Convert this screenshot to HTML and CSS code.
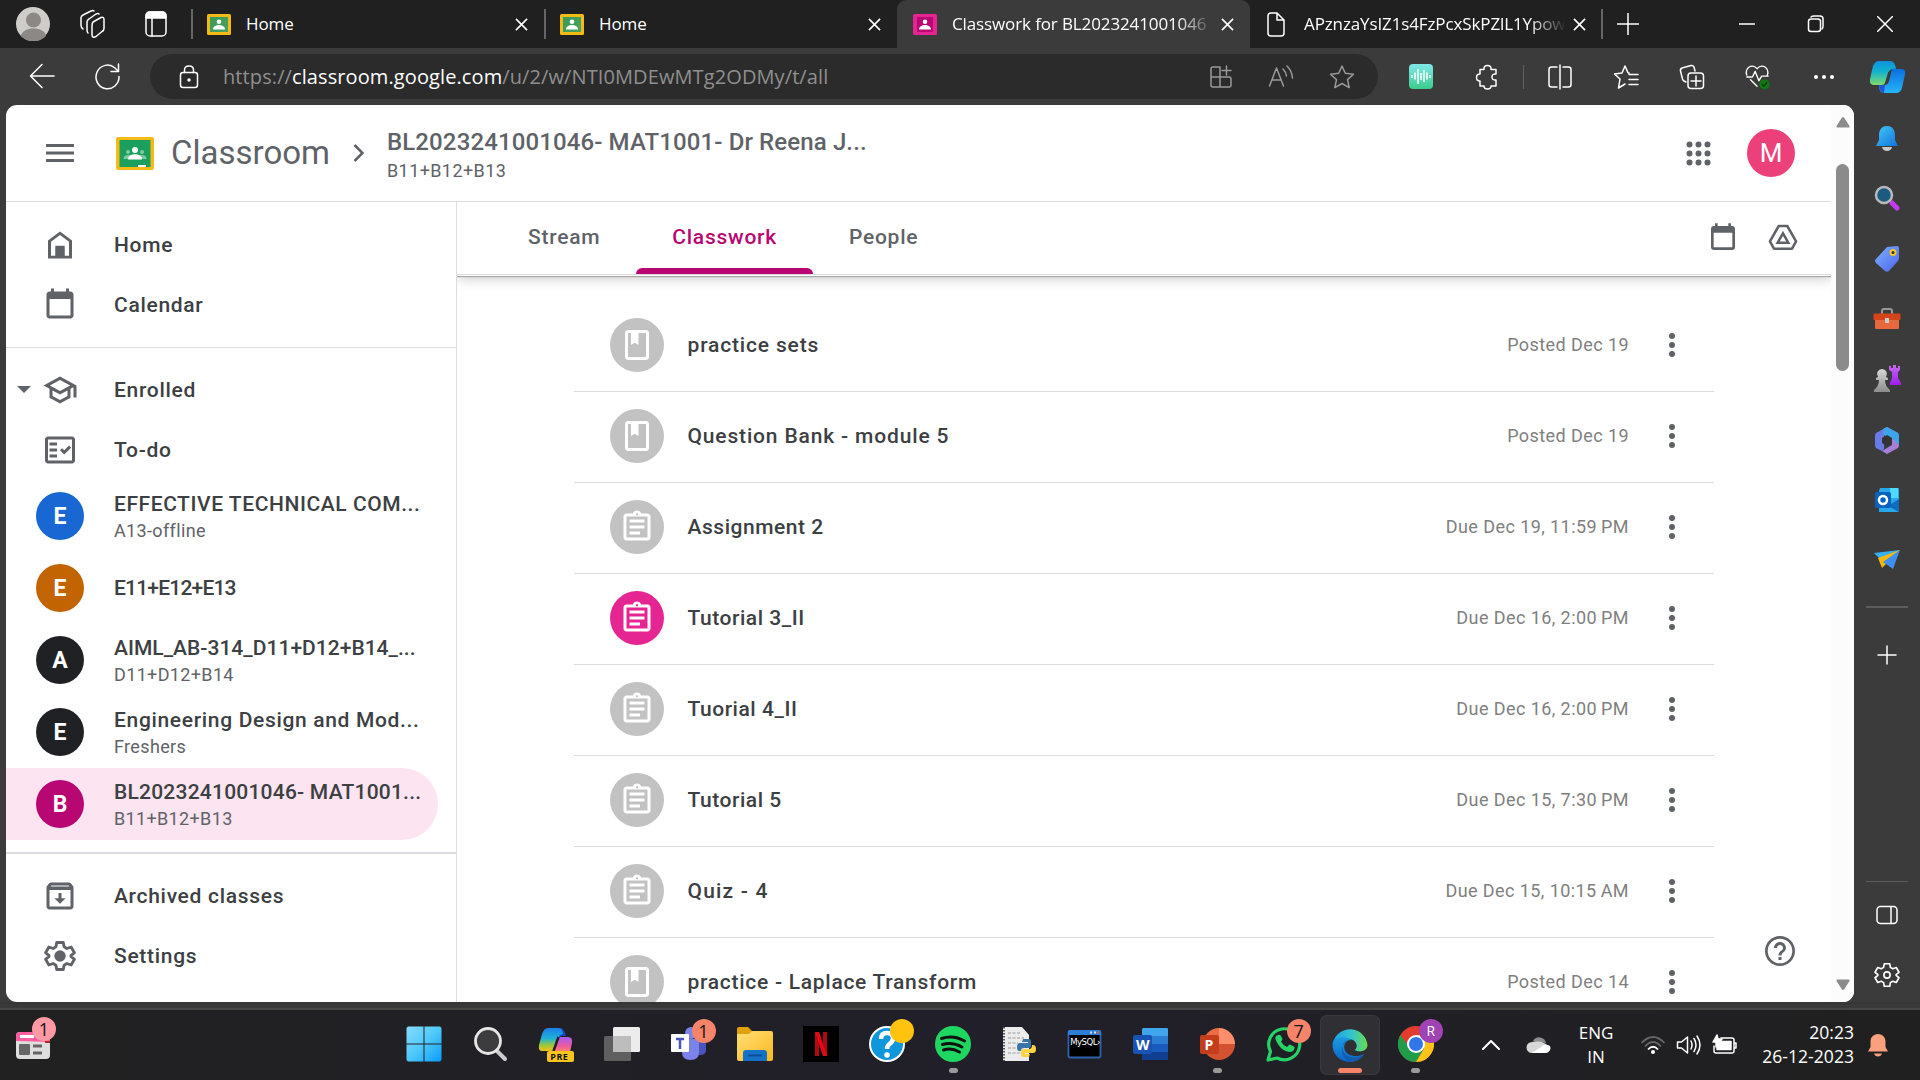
FILE: index.html
```html
<!DOCTYPE html>
<html lang="en">
<head>
<meta charset="utf-8">
<title>Classwork for BL2023241001046</title>
<link rel="stylesheet" href="styles.css">
</head>
<body>
<svg class="defs" aria-hidden="true">
  <defs>
    <linearGradient id="g-green" x1="0" y1="0" x2="1" y2="1"><stop offset="0" stop-color="#3a9a58"/><stop offset="1" stop-color="#4aa35f"/></linearGradient>
    <linearGradient id="g-wave" x1="0" y1="0" x2="0" y2="1"><stop offset="0" stop-color="#7fe9ea"/><stop offset="1" stop-color="#3ccb8d"/></linearGradient>
    <linearGradient id="g-cop1" x1="0" y1="0" x2="0" y2="1"><stop offset="0" stop-color="#0f8fe0"/><stop offset=".45" stop-color="#12b3cf"/><stop offset="1" stop-color="#7fdc6a"/></linearGradient>
    <linearGradient id="g-cop2" x1="0" y1="0" x2="0" y2="1"><stop offset="0" stop-color="#0a6fe0"/><stop offset="1" stop-color="#27b5fa"/></linearGradient>
    <linearGradient id="g-pre1" x1="0" y1="0" x2="0" y2="1"><stop offset="0" stop-color="#1a7fe8"/><stop offset=".45" stop-color="#1eb0d8"/><stop offset=".75" stop-color="#9bc93a"/><stop offset="1" stop-color="#f2c11a"/></linearGradient>
    <linearGradient id="g-pre2" x1="0" y1="0" x2="0" y2="1"><stop offset="0" stop-color="#a45cf0"/><stop offset=".6" stop-color="#ec5aa0"/><stop offset="1" stop-color="#ff8a5c"/></linearGradient>
    <linearGradient id="g-bell" x1="0" y1="0" x2="1" y2="1"><stop offset="0" stop-color="#44c8f8"/><stop offset="1" stop-color="#1173dd"/></linearGradient>
    <linearGradient id="g-tag" x1="0" y1="0" x2="1" y2="1"><stop offset="0" stop-color="#7cb4ff"/><stop offset="1" stop-color="#4f62ea"/></linearGradient>
    <linearGradient id="g-win" x1="0" y1="0" x2="1" y2="1"><stop offset="0" stop-color="#86dcfd"/><stop offset=".5" stop-color="#4fc8fb"/><stop offset="1" stop-color="#0a9bfb"/></linearGradient>
    <linearGradient id="g-folder" x1="0" y1="0" x2="1" y2="1"><stop offset="0" stop-color="#ffe07a"/><stop offset="1" stop-color="#fbb81a"/></linearGradient>
    <linearGradient id="g-edge" x1="0" y1="0" x2="1" y2="0"><stop offset="0" stop-color="#1ba0e6"/><stop offset=".55" stop-color="#35c5cc"/><stop offset="1" stop-color="#68dc4a"/></linearGradient>
    <linearGradient id="g-edge2" x1="0" y1="0" x2="0" y2="1"><stop offset="0" stop-color="#1b9de2"/><stop offset="1" stop-color="#0a63c9"/></linearGradient>
    <linearGradient id="g-gray" x1="0" y1="0" x2="0" y2="1"><stop offset="0" stop-color="#d8d8d8"/><stop offset="1" stop-color="#8c8c8c"/></linearGradient>
    <linearGradient id="g-purple" x1="0" y1="0" x2="0" y2="1"><stop offset="0" stop-color="#c66af2"/><stop offset="1" stop-color="#9d1cf0"/></linearGradient>
    <symbol id="favicon" viewBox="0 0 24 21"><rect width="24" height="21" rx="1.5" fill="#f5ba15"/><rect x="3" y="3" width="18" height="15" fill="url(#g-green)"/><circle cx="12" cy="7.8" r="2.3" fill="#fff"/><path d="M6 15.5c0-6 12-6 12 0z" fill="#fff"/></symbol>
    <symbol id="close" viewBox="0 0 14 14"><path d="M1 1l12 12M13 1L1 13" stroke="#fff" stroke-width="1.7" fill="none"/></symbol>
    <symbol id="calendar" viewBox="0 0 24 24"><path d="M19 3h-1V1h-2v2H8V1H6v2H5c-1.100 0-2 .9-2 2v14c0 1.100.9 2 2 2h14c1.100 0 2-.9 2-2V5c0-1.100-.9-2-2-2zm0 16H5V8h14v11z"/></symbol>
    <symbol id="material" viewBox="0 0 24 24"><path d="M18 2H6c-1.100 0-2 .9-2 2v16c0 1.100.9 2 2 2h12c1.100 0 2-.9 2-2V4c0-1.100-.9-2-2-2zm0 18H6V4h2v8l2.500-1.500L13 12V4h5v16z"/></symbol>
    <symbol id="assignment" viewBox="0 0 24 24"><path d="M7 15h7v2H7zm0-4h10v2H7zm0-4h10v2H7zm12-4h-4.180C14.400 1.840 13.300 1 12 1s-2.400.84-2.820 2H5c-1.100 0-2 .9-2 2v14c0 1.100.9 2 2 2h14c1.100 0 2-.9 2-2V5c0-1.100-.9-2-2-2zm-7-.25c.41 0 .75.340.75.750s-.34.750-.75.750-.75-.34-.75-.75.340-.75.750-.75zM19 19H5V5h14v14z"/></symbol>
    <symbol id="more" viewBox="0 0 24 24"><circle cx="12" cy="6" r="2"/><circle cx="12" cy="12" r="2"/><circle cx="12" cy="18" r="2"/></symbol>
    <symbol id="gear" viewBox="0 0 24 24"><path fill="none" stroke-linejoin="round" d="M9.800 3h4.400l.5 2.900 1.900 1.100 2.800-1 2.200 3.800-2.300 1.900v.6l2.300 1.900-2.200 3.800-2.800-1-1.900 1.100-.5 2.900H9.800l-.5-2.900L7.400 17l-2.800 1-2.200-3.800 2.300-1.900v-.6L2.400 9.800 4.600 6l2.800 1 1.900-1.100z"/></symbol>
  </defs>
</svg>
<div class="screen">

  <header class="tabstrip">
    <div class="strip-tools">
      <svg width="34" height="34" viewBox="0 0 34 34"><circle cx="17" cy="17" r="17" fill="#cfcdca"/><circle cx="17.500" cy="13" r="7.500" fill="#8b8885"/><path d="M5 29c1-10 24-10 25 0a17 17 0 0 1-25 0z" fill="#8b8885"/></svg>
      <svg class="line" width="28" height="30" viewBox="0 0 28 30"><path d="M14 13l8-4.500q3-1 3 2v9q0 2-2 3l-6 5q-4 2-4-2v-9q0-2 1-3.500zM9 24q-1-1-1-3v-8q0-2 2-3l7-5q2-1 3 0M4 20q-2-1-2-4V9q0-2 2-3l8-4q2-1 3 0"/></svg>
      <svg class="line" width="24" height="28" viewBox="0 0 24 28"><rect x="2" y="2" width="20" height="24" rx="4"/><path d="M2 6q0-4 4-4h12q4 0 4 4v2H2z" fill="#fff"/><path d="M8 8v18"/></svg>
    </div>
    <div class="tab divided"><svg class="fav"><use href="#favicon"/></svg><span class="tab-title">Home</span><svg class="x"><use href="#close"/></svg></div>
    <div class="tab divided"><svg class="fav"><use href="#favicon"/></svg><span class="tab-title">Home</span><svg class="x"><use href="#close"/></svg></div>
    <div class="tab active"><svg class="fav" viewBox="0 0 24 21"><rect width="24" height="21" rx="1.500" fill="#e52592"/><rect x="4" y="3" width="16" height="15" fill="#b80672"/><circle cx="12" cy="7.800" r="2.300" fill="#fff"/><path d="M6 15.500c0-6 12-6 12 0z" fill="#fff"/></svg><span class="tab-title faded">Classwork for BL2023241001046</span><svg class="x"><use href="#close"/></svg></div>
    <div class="tab"><svg class="line doc" width="20" height="25" viewBox="0 0 20 25"><path d="M2 4q0-3 3-3h6l7 7v13q0 3-3 3H5q-3 0-3-3zM11 1v7h7"/></svg><span class="tab-title faded">APznzaYsIZ1s4FzPcxSkPZlL1Ypow</span><svg class="x"><use href="#close"/></svg></div>
    <div class="new-tab divided"><svg class="line" width="22" height="22" viewBox="0 0 22 22"><path d="M11 .5v21M.5 11h21"/></svg></div>
    <div class="window-buttons">
      <svg class="line" width="16" height="16" viewBox="0 0 16 16"><path d="M0 8h15.500"/></svg>
      <svg class="line" width="18" height="18" viewBox="0 0 18 18"><rect x="1.500" y="4" width="12" height="12.500" rx="2.500"/><path d="M4 2q1-1 3-1h6q3 0 3 3v7q0 2-1 3"/></svg>
      <svg class="line" width="16" height="16" viewBox="0 0 16 16"><path d="M.5.500l15 15M15.500.500l-15 15"/></svg>
    </div>
  </header>

  <div class="toolbar">
    <div class="nav-buttons">
      <svg class="line" width="26" height="26" viewBox="0 0 26 26"><path d="M25 13H2M13 1.500L1.500 13 13 24.500"/></svg>
      <svg class="line" width="28" height="28" viewBox="0 0 28 28"><path d="M25 13.500A11.500 11.800 0 1 1 21 5l3 3M24.500 1v7.500H17"/></svg>
    </div>
    <div class="address">
      <svg class="line" width="20" height="26" viewBox="0 0 20 26"><rect x="1.500" y="8.500" width="17" height="15" rx="2.500"/><path d="M5.500 8.500V6q0-4 4.500-4t4.500 4v2.500"/><circle cx="10" cy="16" r="1" fill="#fff"/></svg>
      <span class="url">https://<b>classroom.google.com</b>/u/2/w/NTI0MDEwMTg2ODMy/t/all</span>
      <span class="address-tools">
        <svg class="line" width="24" height="24" viewBox="0 0 24 24"><path d="M2 4q0-2 2-2h7v20H4q-2 0-2-2zM2 12h18q2 0 2 2v6q0 2-2 2h-9M17.500 1v9M13 5.500h9"/></svg>
        <svg class="line" width="26" height="24" viewBox="0 0 26 24"><path d="M1.500 21L8.500 3l7 18M4.500 15h8M15 4q3 3 3.500 7M19 1q5 5 5.500 12"/></svg>
        <svg class="line" width="26" height="26" viewBox="0 0 26 26"><path d="M13 2l3.300 7.300 8.200.9-6 5.400 1.700 8L13 19.500l-7.200 4.100 1.700-8-6-5.400 8.200-.9z"/></svg>
      </span>
    </div>
    <div class="tools ext">
      <svg width="24" height="25" viewBox="0 0 24 25"><rect width="24" height="25" rx="4" fill="url(#g-wave)"/><path d="M3 11v3M6 8.500v7M9 5v15M12 9v7M15 6v12M18 8.500v7M21 11v3" stroke="#fff" stroke-width="1.500"/></svg>
      <svg class="line" width="24" height="26" viewBox="0 0 24 26"><path d="M5 5.500h4q-.5-4 3.500-4t3.500 4h5V10q-4-.5-4 3t4 3v6h-5q0 3-3.500 3t-3.500-3H5v-5q-3.500 0-3.500-3.500T5 10z"/></svg>
    </div>
    <div class="tool-divider"></div>
    <div class="tools">
      <svg class="line" width="26" height="26" viewBox="0 0 26 26"><path d="M10 3H4.500q-2.500 0-2.500 2.500v15q0 2.500 2.500 2.500H10M16 3h5.500q2.500 0 2.500 2.500v15q0 2.500-2.500 2.500H16M13 1v24"/></svg>
      <svg class="line" width="26" height="26" viewBox="0 0 26 26"><path d="M16 9l-1-.2L12 2 9 9l-7.500 1 5.500 5-1.500 9 6.500-4M16 10.500h9M16 15.500h9M16 20.500h9"/></svg>
      <svg class="line" width="26" height="26" viewBox="0 0 26 26"><path d="M7 18l-2-1q-1-.5-1.500-2L1.500 7q-.5-2 1.500-3l9-2.500q2-.5 3 1.500l1 4"/><rect x="9" y="9" width="15.500" height="15.500" rx="3"/><path d="M17 12v10M12 17h10"/></svg>
      <svg class="line" width="28" height="28" viewBox="0 0 28 28"><path d="M2 12q-2-5 2-8.500 5-3 9 1.500 4-4.500 9-1.500 4 3.500 2 8.500M6 17l7 7M2 14h6l3-6 4 10 3-5h7"/><circle cx="21" cy="22" r="5.500" fill="#0e7a0e" stroke="none"/><path d="M18.500 22l2 2 3-4" stroke="#04370a"/></svg>
      <svg width="22" height="8" viewBox="0 0 22 8"><g fill="#fff"><circle cx="3" cy="4" r="2"/><circle cx="11" cy="4" r="2"/><circle cx="19" cy="4" r="2"/></g></svg>
    </div>
    <div class="copilot"><svg width="37" height="34" viewBox="0 0 37 34"><path d="M23 9h9q5 0 4 5l-3 14q-1.500 5-6 5H15q-5 0-5-8h5q4 0 5-4z" fill="url(#g-cop2)"/><path d="M10 1h11q5 0 6 8-6-1-7.500 4l-3 9q-1 3-4 3H4q-4-1-3-6L4 6q2-5 6-5z" fill="url(#g-cop1)"/><path d="M10 25h6l-1 8q-4 0-5-8z" fill="#2354d8"/><path d="M20.500 12l-3.500 12" stroke="#3b3b3b" stroke-width="2.500"/></svg></div>
  </div>

  <div class="workspace">
    <div class="page">
      <div class="page-body">
        <div class="class-header">
          <svg width="28" height="18" viewBox="0 0 28 18"><path d="M0 1.500h28M0 9h28M0 16.500h28" stroke="#5f6368" stroke-width="3"/></svg>
          <svg class="logo" width="38" height="33" viewBox="0 0 38 33"><rect width="38" height="33" rx="2" fill="#f5ba15"/><rect x="3.500" y="3" width="31" height="27" fill="#1a9f5e"/><g fill="#7fcba1"><circle cx="12" cy="15" r="2"/><circle cx="26" cy="15" r="2"/><path d="M7.500 22q0-4 5-4h13q5 0 5 4z"/></g><circle cx="19" cy="13" r="3" fill="#fff"/><path d="M12 22.500c0-7 14-7 14 0z" fill="#fff"/><rect x="22" y="28" width="8" height="2" fill="#fff"/></svg>
          <span class="brand">Classroom</span>
          <svg class="crumb" width="11" height="18" viewBox="0 0 11 18"><path d="M1.500 1l8 8-8 8" fill="none" stroke="#5f6368" stroke-width="2.500"/></svg>
          <div class="crumb-text"><span class="crumb-title">BL2023241001046- MAT1001- Dr Reena J...</span><span class="crumb-sub">B11+B12+B13</span></div>
          <svg width="25" height="25" viewBox="0 0 25 25"><g fill="#5f6368"><circle cx="3.500" cy="3.500" r="3"/><circle cx="12.500" cy="3.500" r="3"/><circle cx="21.500" cy="3.500" r="3"/><circle cx="3.500" cy="12.500" r="3"/><circle cx="12.500" cy="12.500" r="3"/><circle cx="21.500" cy="12.500" r="3"/><circle cx="3.500" cy="21.500" r="3"/><circle cx="12.500" cy="21.500" r="3"/><circle cx="21.500" cy="21.500" r="3"/></g></svg>
          <span class="account">M</span>
        </div>
        <div class="columns">
          <nav class="drawer">
            <div class="drawer-group">
              <a class="drawer-item"><svg class="mi" viewBox="0 0 24 24"><path d="M12 3L4 9v12h16V9zm6 16.200H15V13H9v6.200H6V9.900l6-4.500 6 4.500z" fill-rule="evenodd"/><path d="M9 12.500h6V20H9z"/></svg><span>Home</span></a>
              <a class="drawer-item"><svg class="mi"><use href="#calendar"/></svg><span>Calendar</span></a>
            </div>
            <div class="drawer-group">
              <a class="drawer-item"><svg class="caret" width="14" height="8" viewBox="0 0 14 8"><path d="M0 0h14L7 7z"/></svg><svg class="mi" viewBox="0 0 24 24"><path d="M12 3L1 9l4 2.180v6L12 21l7-3.820v-6l2-1.090V17h2V9L12 3zm6.820 6L12 12.720 5.180 9 12 5.280 18.820 9zM17 15.990l-5 2.730-5-2.730v-3.720L12 15l5-2.730v3.720z"/></svg><span>Enrolled</span></a>
              <a class="drawer-item"><svg class="mi" viewBox="0 0 24 24"><path d="M20 3H4c-1.100 0-2 .9-2 2v14c0 1.100.9 2 2 2h16c1.100 0 2-.9 2-2V5c0-1.100-.9-2-2-2zm0 16H4V5h16v14zM19.410 10.420L17.990 9l-3.170 3.170-1.410-1.420L12 12.160 14.820 15zM5 7h5v2H5zM5 11h5v2H5zM5 15h5v2H5z"/></svg><span>To-do</span></a>
              <a class="class-item"><span class="badge blue">E</span><span class="class-text"><span class="name">EFFECTIVE TECHNICAL COM...</span><span class="section">A13-offline</span></span></a>
              <a class="class-item"><span class="badge orange">E</span><span class="class-text"><span class="name condensed">E11+E12+E13</span></span></a>
              <a class="class-item"><span class="badge dark">A</span><span class="class-text"><span class="name snug">AIML_AB-314_D11+D12+B14_...</span><span class="section">D11+D12+B14</span></span></a>
              <a class="class-item"><span class="badge dark">E</span><span class="class-text"><span class="name wide">Engineering Design and Mod...</span><span class="section">Freshers</span></span></a>
              <a class="class-item current"><span class="badge magenta">B</span><span class="class-text"><span class="name tight">BL2023241001046- MAT1001...</span><span class="section">B11+B12+B13</span></span></a>
            </div>
            <div class="drawer-group last">
              <a class="drawer-item"><svg class="mi" viewBox="0 0 24 24"><path d="M20.540 5.230l-1.390-1.680C18.880 3.210 18.470 3 18 3H6c-.47 0-.88.210-1.160.550L3.460 5.230C3.170 5.570 3 6.020 3 6.500V19c0 1.100.9 2 2 2h14c1.100 0 2-.9 2-2V6.500c0-.48-.17-.93-.46-1.270zM6.240 5h11.520l.5.700H5.740zM5 19V8h14v11zM11 10h2v3.500h2.800L12 17.200l-3.800-3.700H11z"/></svg><span>Archived classes</span></a>
              <a class="drawer-item"><svg class="mi stroked" viewBox="0 0 24 24"><use href="#gear"/><circle cx="12" cy="12" r="3.800" stroke="none"/></svg><span>Settings</span></a>
            </div>
          </nav>
          <main class="content">
            <div class="class-tabs">
              <a class="class-tab">Stream</a><a class="class-tab selected">Classwork</a><a class="class-tab">People</a>
              <span class="tab-actions">
                <svg class="ti"><use href="#calendar"/></svg>
                <svg class="ti" viewBox="0 0 24 24"><path fill="none" stroke-width="1.900" stroke-linejoin="round" d="M8.800 3h6.400L21.800 14.500l-3 5.500H5.200L2.200 14.500z" stroke="#5f6368"/><path fill="none" stroke-width="1.900" d="M12 8.500l4 7H8z" stroke="#5f6368"/></svg>
              </span>
            </div>
            <div class="list">
              <div class="row"><span class="disc"><svg><use href="#material"/></svg></span><span class="row-title ls-l">practice sets</span><span class="row-date">Posted Dec 19</span><svg class="kebab"><use href="#more"/></svg></div>
              <div class="row"><span class="disc"><svg><use href="#material"/></svg></span><span class="row-title ls-l">Question Bank - module 5</span><span class="row-date">Posted Dec 19</span><svg class="kebab"><use href="#more"/></svg></div>
              <div class="row"><span class="disc"><svg><use href="#assignment"/></svg></span><span class="row-title ls-s">Assignment 2</span><span class="row-date">Due Dec 19, 11:59&#8201;PM</span><svg class="kebab"><use href="#more"/></svg></div>
              <div class="row"><span class="disc pink"><svg><use href="#assignment"/></svg></span><span class="row-title ls-s">Tutorial 3_II</span><span class="row-date">Due Dec 16, 2:00&#8201;PM</span><svg class="kebab"><use href="#more"/></svg></div>
              <div class="row"><span class="disc"><svg><use href="#assignment"/></svg></span><span class="row-title ls-s">Tuorial 4_II</span><span class="row-date">Due Dec 16, 2:00&#8201;PM</span><svg class="kebab"><use href="#more"/></svg></div>
              <div class="row"><span class="disc"><svg><use href="#assignment"/></svg></span><span class="row-title ls-s">Tutorial 5</span><span class="row-date">Due Dec 15, 7:30&#8201;PM</span><svg class="kebab"><use href="#more"/></svg></div>
              <div class="row"><span class="disc"><svg><use href="#assignment"/></svg></span><span class="row-title ls-xl">Quiz - 4</span><span class="row-date">Due Dec 15, 10:15&#8201;AM</span><svg class="kebab"><use href="#more"/></svg></div>
              <div class="row"><span class="disc"><svg><use href="#material"/></svg></span><span class="row-title">practice - Laplace Transform</span><span class="row-date">Posted Dec 14</span><svg class="kebab"><use href="#more"/></svg></div>
            </div>
          </main>
        </div>
        <svg class="help" viewBox="0 0 24 24"><path d="M11 18h2v-2h-2v2zm1-16C6.480 2 2 6.480 2 12s4.480 10 10 10 10-4.480 10-10S17.520 2 12 2zm0 18.200a8.200 8.200 0 1 1 0-16.400 8.200 8.200 0 0 1 0 16.400zM12 6c-2.210 0-4 1.790-4 4h2c0-1.100.9-2 2-2s2 .9 2 2c0 2-3 1.750-3 5h2c0-2.250 3-2.500 3-5 0-2.210-1.790-4-4-4z"/></svg>
      </div>
      <div class="scrollbar">
        <svg width="14" height="11" viewBox="0 0 14 11"><path d="M7 0q1 0 2 2l4.500 7q.5 1.500-1 1.500h-11q-1.500 0-1-1.500L5 2q1-2 2-2z"/></svg>
        <div class="track"><div class="thumb"></div></div>
        <svg width="14" height="11" viewBox="0 0 14 11"><path d="M7 11q1 0 2-2l4.500-7q.5-1.500-1-1.500h-11Q0 .5.500 2L5 9q1 2 2 2z"/></svg>
      </div>
    </div>
    <aside class="edge-bar">
      <span class="edge-slot"><svg width="26" height="28" viewBox="0 0 26 28"><path d="M8 23q1 4 5 4t5-4z" fill="#c9c9c9"/><path d="M13 2c6 0 8 5 8 9v5l3 6H2l3-6v-5c0-4 2-9 8-9z" fill="url(#g-bell)"/></svg></span>
      <span class="edge-slot"><svg width="26" height="28" viewBox="0 0 26 28"><path d="M18 19l5 5" stroke="#c13cf0" stroke-width="5" stroke-linecap="round"/><circle cx="10" cy="11" r="8" fill="#1c5a80" stroke="#b9b9b9" stroke-width="2.500"/></svg></span>
      <span class="edge-slot"><svg width="26" height="28" viewBox="0 0 26 28"><path d="M13 2l10-1q2 0 2 2v10q0 2-1 3l-9 10q-2 1.500-4 0l-9-8q-2-2 0-4z" fill="url(#g-tag)"/><circle cx="19" cy="7.500" r="2.500" fill="#333" stroke="#f7c71e" stroke-width="2"/></svg></span>
      <span class="edge-slot"><svg width="28" height="24" viewBox="0 0 28 24"><path d="M9 7V4q0-2 2-2h6q2 0 2 2v3" fill="none" stroke="#999" stroke-width="2"/><rect x="2" y="12" width="24" height="10" rx="1.500" fill="#e8693d"/><rect x=".5" y="6.500" width="27" height="6.500" rx="1" fill="#d4441a"/><rect x="12" y="11" width="4" height="5" fill="#ccc"/></svg></span>
      <span class="edge-slot"><svg width="28" height="28" viewBox="0 0 28 28"><path d="M16 1h2v2h2V0h3v3h2V1h2v4l-2 2v6l3 5v2H17v-2l2-5V7l-3-2z" fill="url(#g-purple)"/><path d="M9 4a5 5 0 0 1 4 8l2 1v2h-3q0 6 5 10v2H1v-2q5-4 5-10H3v-2l2-1a5 5 0 0 1 4-8z" fill="url(#g-gray)"/></svg></span>
      <span class="edge-slot"><svg width="26" height="28" viewBox="0 0 26 28"><path d="M13 1L2 7q-1 1-1 3v9q0 2 1 3l6 3 2-2V9l15 10V10q0-2-1-3z" fill="#6a7be8"/><path d="M13 1l11 6q1 1 1 3v9L10 9l-1-6z" fill="#3ca6e8"/><path d="M25 19q0 2-1 3l-11 6-5-3 10-6V12z" fill="#a77ed8"/><path d="M13 9l5 3v5l-5 3-5-3v-5z" fill="#333"/></svg></span>
      <span class="edge-slot"><svg width="26" height="26" viewBox="0 0 26 26"><path d="M6 1h18q1 0 1 1v22q0 1-1 1H5V4z" fill="#28a8ea"/><path d="M16 1h8v10h-8z" fill="#50d9ff"/><path d="M25 12v13L14 19z" fill="#0f6cbd"/><rect x="1" y="5" width="16" height="16" rx="2" fill="#0a62c0"/><circle cx="9" cy="13" r="4" fill="none" stroke="#fff" stroke-width="2.500"/></svg></span>
      <span class="edge-slot"><svg width="26" height="20" viewBox="0 0 26 20"><path d="M0 3L26 0 8 11z" fill="#36b0f0"/><path d="M26 0L8 18 4 8z" fill="#f5b90f"/><path d="M26 0l-7 19-10-7z" fill="#3f8ff0"/></svg></span>
      <hr class="thick">
      <svg class="line" width="20" height="20" viewBox="0 0 20 20"><path d="M10 1v18M1 10h18"/></svg>
      <div class="spacer"></div>
      <hr>
      <svg class="line panel" width="22" height="20" viewBox="0 0 22 20"><rect x="1" y="1.500" width="20" height="17" rx="3.500"/><path d="M15 2v16"/></svg>
      <svg class="edge-gear" width="30" height="30" viewBox="0 0 24 24"><use href="#gear"/><circle cx="12" cy="12" r="2.500"/></svg>
    </aside>
  </div>

  <footer class="taskbar">
    <div class="widgets"><svg width="34" height="28" viewBox="0 0 34 28"><rect y="1" width="34" height="27" rx="4" fill="#dedede"/><path d="M0 10V5q0-4 4-4h26q4 0 4 4v6z" fill="#ff5fa2"/><path d="M29 10h5v2h-5z" fill="#b3261e"/><path d="M4 5.500h14" stroke="#fff" stroke-width="3"/><rect x="3" y="13" width="11" height="11" rx="1" fill="#666"/><path d="M17 15h9M17 22h9" stroke="#666" stroke-width="3"/></svg><span class="count pinkish">1</span></div>
    <div class="apps-row">
      <span class="app"><svg viewBox="0 0 36 36"><path d="M2 .5h15.500v17H.5V2zM18.500.500H34l1.500 1.500v15.500h-17zM.5 18.500h17v17H2L.5 34zM18.500 18.500h17V34L34 35.500H18.500z" fill="url(#g-win)"/></svg></span>
      <span class="app"><svg viewBox="0 0 36 36"><path d="M24 24l9 9" stroke="#c9ccd0" stroke-width="4" stroke-linecap="round"/><circle cx="16" cy="15" r="12.500" fill="#3c3c3e" stroke="#e6e6e6" stroke-width="2.800"/></svg></span>
      <span class="app"><svg viewBox="0 0 36 36"><path d="M20 11h10q5 0 4 6l-2 9H14z" fill="url(#g-pre2)"/><path d="M22 2q4 0 6 8-5-1-7 2z" fill="#1a46c8"/><path d="M10 2h11q3 0 4 6-4 0-5 6l-4 9q-1 2-3 2H4q-4-0-3-6L4 8q2-6 6-6z" fill="url(#g-pre1)"/><path d="M20.500 11l-5 14" stroke="#211f26" stroke-width="2.500"/><rect x="9" y="25" width="27" height="11" rx="2" fill="#f8c51c"/></svg><b class="pre">PRE</b></span>
      <span class="app"><svg viewBox="0 0 36 36"><rect x="9" y="1" width="27" height="25" rx="1.500" fill="#ececec"/><rect y="10" width="27" height="25" rx="1.500" fill="#5f5f5f"/><path d="M9 10h18v16H9z" fill="#bdbdbd"/></svg></span>
      <span class="app"><svg viewBox="0 0 36 36"><path d="M24 14h11v10q0 5-6 5h-5z" fill="#4b53bc"/><circle cx="20" cy="7" r="6" fill="#7b83eb"/><path d="M11 13h17v13q0 8-8.500 8T11 26z" fill="#7b83eb"/><rect y="8" width="18" height="18" rx="1" fill="#fff"/><path d="M5 13h8M9 13v10" stroke="#4b53bc" stroke-width="2.500"/></svg><span class="count coral">1</span></span>
      <span class="app"><svg viewBox="0 0 36 36"><path d="M0 3q0-2 2-2h9l4 4v6H0z" fill="#e0a10c"/><path d="M0 8h12l3-3h19q2 0 2 2v26q0 2-2 2H2q-2 0-2-2z" fill="url(#g-folder)"/><path d="M6 35v-8q0-3 3-3h18q3 0 3 3v8z" fill="#1472c8"/><path d="M11 29.500h14" stroke="#0a4f96" stroke-width="2"/></svg></span>
      <span class="app"><svg viewBox="0 0 36 36"><rect width="36" height="36" fill="#000"/><path d="M12 6h4v24h-4zM20 6h4v24h-4z" fill="#b20710"/><path d="M12 6h4l8 24h-4z" fill="#e50914"/></svg></span>
      <span class="app"><svg viewBox="0 0 36 36"><circle cx="18" cy="18" r="17" fill="#0f97dc" stroke="#fff" stroke-width="2"/><path d="M12 13q0-6 6-6t6 5.500q0 3-3.500 5.500-2.500 2-2.500 5" fill="none" stroke="#fff" stroke-width="4.500"/><circle cx="18" cy="29" r="2.800" fill="#fff"/></svg><span class="count amber"></span></span>
      <span class="app running"><svg viewBox="0 0 36 36"><circle cx="18" cy="18" r="18" fill="#1ed760"/><path d="M6.500 12.500q12-4 23 2.500M7.500 18.500q10-3 19.500 2.500M8.500 24q8-2.500 16 2" fill="none" stroke="#111" stroke-width="3" stroke-linecap="round"/></svg></span>
      <span class="app"><svg viewBox="0 0 36 36"><path d="M2 1h19l7 8v26H2z" fill="#ececec"/><path d="M7 7h12M7 12h16M7 17h10M7 22h9M7 27h12" stroke="#b5b5b5" stroke-width="1.500" stroke-dasharray="3 1.500"/><path d="M3 1v34" stroke="#555" stroke-width="2" stroke-dasharray="1.500 1.500"/><path d="M22 13h6q2 0 2 3v4q0 2-3 2h-4q-3 0-3 3h-2q-2 0-2-4t3-4h8v-1h-6z" fill="#3a74a8"/><path d="M28 31h-6q-2 0-2-3v-3q0-2 3-2h5q3 0 3-4h1q3 0 3 4t-3 4h-8v1h5z" fill="#fdd346"/></svg></span>
      <span class="app"><svg viewBox="0 0 36 36"><rect x="1.500" y="5" width="32" height="26.500" rx="1.500" fill="#000" stroke="#2f63ad" stroke-width="1.800"/><path d="M1 9V6q0-2 2-2h29q2 0 2 2v3z" fill="#2e7cd6"/><path d="M23 6.500h2M27 6.500h2" stroke="#cfe5ff" stroke-width="2"/><path d="M30 6.500h2" stroke="#e5603c" stroke-width="2"/></svg><span class="mysql">MySQL›</span></span>
      <span class="app"><svg viewBox="0 0 36 36"><path d="M10 2h24q1 0 1 1v8H9V3z" fill="#41a5ee"/><path d="M9 10h26v8H9z" fill="#2b7cd3"/><path d="M9 18h26v8H9z" fill="#185abd"/><path d="M9 26h26v7q0 1-1 1H10q-1 0-1-1z" fill="#103f91"/><rect y="9" width="19" height="19" rx="2" fill="#1854b4"/></svg><b class="office">W</b></span>
      <span class="app running"><svg viewBox="0 0 36 36"><path d="M19 2a16 16 0 0 0-16 16h16z" fill="#ed6c47"/><path d="M19 2a16 16 0 0 1 16 16H19z" fill="#ff8f6b"/><path d="M3 18a16 16 0 0 0 32 0z" fill="#d35230"/><rect y="9" width="19" height="19" rx="2" fill="#c43e1c"/></svg><b class="office">P</b></span>
      <span class="app"><svg viewBox="0 0 36 36"><path d="M2 34l2.500-8.500A15.500 15.500 0 1 1 11 32z" fill="none" stroke="#25d366" stroke-width="3.200" stroke-linejoin="round"/><path d="M12 9q2-1 3 1l1.500 3q0 1-1.500 2.500 2 4 6 5.500l2-2q1-1 2 0l3 1.500q1 .5.500 2-1 3.500-5 3.500-7-1-11-7t-3-8q.5-1.500 2.500-2z" fill="#25d366"/></svg><span class="count coral">7</span></span>
      <span class="app focused"><svg viewBox="0 0 36 36"><path d="M1 17a17.500 17.500 0 0 1 34.500 2c0 6-8 8-13 5 4-2 3-10-5-11-9-1-15 3-16.500 4z" fill="url(#g-edge)"/><path d="M.5 18c1-8 15-8 18.500-4-8 0-9 10-3 14 6 3.500 12 2 16 0-4 6-9 8-14 8-10 0-18-8-17.500-18z" fill="url(#g-edge2)"/><path d="M17 14c-8 1-9 12-1 16 6 3 11 1 16-1.500-3 5-8 7.500-14 7.500-8-3-13-17-1-22z" fill="#1656a5" fill-opacity=".75"/></svg></span>
      <span class="app running"><svg viewBox="0 0 36 36"><circle cx="18" cy="18" r="18" fill="#e33b2e"/><path d="M2.400 9A18 18 0 0 0 18 36l8-13.500-8-4.500H9z" fill="#1f9d4b"/><path d="M18 36A18 18 0 0 0 33.600 9H18l8 13.500z" fill="#fcc41a"/><circle cx="18" cy="18" r="9" fill="#fff"/><circle cx="18" cy="18" r="7" fill="#3076e8"/></svg><span class="count violet">R</span></span>
    </div>
    <div class="tray">
      <svg class="line" width="18" height="10" viewBox="0 0 18 10"><path d="M1 9l8-8 8 8" stroke-width="2"/></svg>
      <svg class="cloud" width="26" height="18" viewBox="0 0 26 18"><path d="M7 5a7 7 0 0 1 13 2z" fill="#8f8f8f"/><path d="M6 17a5.500 5.500 0 0 1 0-11q8-2 14 2a5 5 0 0 1 0 9z" fill="#d8d8d8"/><path d="M6 17h14a5 5 0 0 0 4-7q-5-3-9 1z" fill="#fff"/></svg>
      <span class="lang">ENG<br>IN</span>
      <svg class="wifi" width="26" height="20" viewBox="0 0 26 20"><g fill="none" stroke-width="1.800"><path d="M1.500 8q11.500-12 23 0M5 11.500q8-9 16 0" stroke="#666"/><path d="M8 14.500q5-5.500 10 0" stroke="#fff"/></g><circle cx="13" cy="17" r="2" fill="#fff"/></svg>
      <svg class="line" width="26" height="22" viewBox="0 0 26 22"><path d="M1.500 8v6h4l6 5V3l-6 5zM15 7q2 4 0 8M18 4.500q4 6.500 0 13M21 2q6 9 0 18"/></svg>
      <svg class="line" width="26" height="22" viewBox="0 0 26 22"><path d="M9 4h11q2 0 2 2v11q0 2-2 2H4q-2 0-2-2v-5M22 9h2v5h-2"/><path d="M9 7.500h10v8H5v-3z" fill="#fff"/><path d="M5 1L1 8h3v5l6-8H6z" fill="#fff"/></svg>
      <span class="clock">20:23<br>26-12-2023</span>
      <svg class="notify" width="20" height="24" viewBox="0 0 20 24"><path d="M10 1c5 0 7.500 4 7.500 7.500V14l2.500 4.500H0L2.500 14V8.500C2.500 5 5 1 10 1zM6 20.500h8q-1 3-4 3t-4-3z" fill="#f9a07f"/></svg>
    </div>
  </footer>
</div>
</body>
</html>
```
FILE: styles.css
```css
* { box-sizing: border-box; }
body { margin: 0; background: #3b3b3b; font-family: Roboto, "Liberation Sans", sans-serif; }
svg { display: block; flex: none; }
.defs { width: 0; height: 0; position: absolute; }
.screen { width: 1920px; height: 1080px; display: grid; grid-template-rows: 48px 57px 905px 70px; overflow: hidden; }
.line { fill: none; stroke: #fff; stroke-width: 1.5; stroke-linecap: round; stroke-linejoin: round; }

/* Browser tabs */
.tabstrip { display: flex; background: #202020; font-family: "Open Sans", "Noto Sans", sans-serif; color: #fff; }
.strip-tools { width: 191px; display: flex; align-items: center; gap: 29px; padding-left: 16px; }
.strip-tools svg:nth-child(3) { margin-left: 8px; }
.tab { width: 353px; height: 48px; display: flex; align-items: center; padding: 0 16px; flex: none; }
.tab:nth-last-child(3) { width: 351px; padding: 0 15px; }
.divided::before { content: ""; width: 1.5px; height: 30px; background: #666; margin: 0 14.5px 0 -16px; }
.tab.active { background: #3b3b3b; border-radius: 9px 9px 0 0; }
.fav { width: 24px; height: 21px; }
.doc { margin-left: 1px; margin-right: 3px; }
.tab-title { width: 260px; margin-left: 15px; font-size: 17px; line-height: 26px; letter-spacing: -.12px; white-space: nowrap; overflow: hidden; }
.faded { -webkit-mask-image: linear-gradient(to right, #000 225px, transparent 262px); mask-image: linear-gradient(to right, #000 225px, transparent 262px); }
.x { width: 13px; height: 13px; margin-left: 9px; }
.new-tab { display: flex; align-items: center; padding-left: 16px; width: 138px; }
.window-buttons { display: flex; align-items: center; gap: 52px; }

/* Address bar row */
.toolbar { display: flex; align-items: center; background: #3b3b3b; }
.nav-buttons { width: 150px; padding-left: 29px; display: flex; gap: 39px; }
.address { width: 1228px; height: 45px; border-radius: 23px; background: #2b2b2b; display: flex; align-items: center; padding: 0 23px 0 29px; }
.url { flex: 1; margin-left: 24px; font: 20px/28px "Open Sans", "Noto Sans", sans-serif; letter-spacing: .1px; color: #8f8f8f; }
.url b { font-weight: 400; color: #fff; }
.address-tools { display: flex; gap: 35px; align-items: center; }
.address-tools .line { stroke: #9a9a9a; }
.tools { display: flex; align-items: center; }
.tools svg { margin: 0 20px; width: 26px; }
.ext { margin-left: 10px; }
.tool-divider { width: 1.5px; height: 24px; background: #606060; margin: 0 2.5px; }
.copilot { flex: 1; display: flex; justify-content: center; padding-right: 2px; }

/* Page area */
.workspace { display: flex; background: linear-gradient(#3b3b3b 897px, #363636 897px, #3b3b3b 903px, #464646 903px); padding: 0 0 8px 6px; }
.page { width: 1848px; display: flex; background: #fff; border-radius: 11px; overflow: hidden; }
.page-body { width: 1825px; position: relative; display: flex; flex-direction: column; }
.class-header { height: 97px; border-bottom: 1px solid #dadce0; display: flex; align-items: center; padding: 0 36px 0 40px; }
.logo { margin-left: 42px; }
.brand { width: 173px; margin-left: 17px; font-size: 33px; line-height: 40px; color: #5f6368; }
.crumb { margin-left: 9px; }
.crumb-text { flex: 1; margin-left: 23px; padding-top: 3px; display: flex; flex-direction: column; color: #5f6368; }
.crumb-title { font-weight: 500; font-size: 24px; line-height: 30px; letter-spacing: .12px; }
.crumb-sub { font-size: 18px; line-height: 24px; letter-spacing: .4px; margin-top: 2px; }
.account { width: 48px; height: 48px; border-radius: 50%; margin-left: 36px; background: #ec407a; color: #fff; font-size: 26px; display: grid; place-items: center; }
.columns { flex: 1; display: flex; min-height: 0; }

/* Class drawer */
.drawer { width: 451px; border-right: 1px solid #dadce0; }
.drawer-group { padding: 12px 0; border-bottom: 1px solid #dadce0; }
.drawer-group:first-child { padding-top: 13px; }
.drawer-group:nth-child(2) { border-bottom-width: 2px; }
.drawer-group.last { border: 0; }
.drawer-item { height: 60px; display: flex; align-items: center; padding-left: 36px; color: #3c4043; font-weight: 500; font-size: 21px; letter-spacing: .7px; }
.drawer-item span { margin-left: 36px; }
.mi { width: 36px; height: 36px; fill: #5f6368; }
.stroked { stroke: #5f6368; stroke-width: 1.9; }
.caret { fill: #5f6368; margin: 0 11px 0 -25px; }
.class-item { height: 72px; display: flex; align-items: center; padding-left: 30px; }
.class-item.current { background: #fce4f0; border-radius: 0 36px 36px 0; width: 432px; }
.badge { width: 48px; height: 48px; border-radius: 50%; display: grid; place-items: center; color: #fff; font-weight: 700; font-size: 23px; }
.blue { background: #1967d2; }
.orange { background: #c26401; }
.dark { background: #202124; }
.magenta { background: #b80672; }
.class-text { margin-left: 30px; display: flex; flex-direction: column; white-space: nowrap; }
.name { font-weight: 500; font-size: 21px; line-height: 28px; color: #3c4043; letter-spacing: .57px; }
.name.wide { letter-spacing: .67px; }
.name.tight { letter-spacing: .22px; }
.name.snug { letter-spacing: .02px; }
.name.condensed { letter-spacing: -.8px; }
.section { font-size: 18px; line-height: 24px; margin: 1px 0 -1px; color: #5f6368; letter-spacing: .35px; }

/* Classwork list */
.content { flex: 1; display: flex; flex-direction: column; overflow: hidden; }
.class-tabs { height: 73px; flex: none; display: flex; padding-left: 35px; border-bottom: 1px solid #dadce0; box-shadow: 0 1px 0 #fff, 0 2px 1px #a8a8a8, 0 4px 12px rgba(0,0,0,.2); margin-bottom: 26px; }
.class-tab { padding: 0 36px; line-height: 70px; font-weight: 500; font-size: 21px; letter-spacing: .75px; color: #5f6368; }
.class-tab.selected { color: #b80672; display: flex; flex-direction: column; }
.class-tab.selected::after { content: ""; height: 6px; margin: -4px -36px 0; border-radius: 6px 6px 0 0; background: #b80672; }
.tab-actions { margin-left: auto; margin-right: 32px; display: flex; gap: 28px; align-items: center; }
.ti { width: 32px; height: 32px; fill: #5f6368; }
.list { margin-left: 117px; width: 1140px; flex: none; }
.row { height: 91px; border-bottom: 1px solid #dadce0; display: flex; align-items: center; padding: 0 24px 2px 36px; }
.disc { width: 54px; height: 54px; border-radius: 50%; background: #c2c2c2; display: grid; place-items: center; }
.disc.pink { background: #e52592; }
.disc svg { width: 36px; height: 36px; fill: #fff; }
.row-title { flex: 1; margin-left: 23.5px; font-weight: 500; font-size: 21px; color: #3c4043; letter-spacing: .72px; }
.ls-xl { letter-spacing: 1.2px; }
.ls-l { letter-spacing: .84px; }
.ls-s { letter-spacing: .54px; }
.row-date { font-size: 18px; letter-spacing: .42px; color: #808080; padding-bottom: 2px; }
.kebab { width: 36px; height: 36px; margin-left: 25px; fill: #5f6368; }
.help { position: absolute; right: 33px; bottom: 33px; width: 36px; height: 36px; fill: #5f6368; }
.scrollbar { width: 23px; background: #fcfcfc; display: flex; flex-direction: column; align-items: center; padding: 12px 0; }
.scrollbar svg { fill: #8b8b8b; }
.track { flex: 1; padding-top: 36px; }
.thumb { width: 13px; height: 207px; border-radius: 7px; background: #8b8b8b; }

/* Browser side bar */
.edge-bar { flex: 1; display: flex; flex-direction: column; align-items: center; padding: 3px 1px 12px 0; }
.edge-slot { height: 60.3px; display: grid; place-items: center; }
.edge-bar hr { width: 42px; height: 1px; border: 0; background: #5c5c5c; margin: 0 0 23px; flex: none; }
.edge-bar hr.thick { height: 2px; margin: 16px 0 37px; }
.spacer { flex: 1; }
.panel { margin-bottom: 35px; }
.edge-gear { fill: none; stroke: #fff; stroke-width: 1.3; }

/* Task bar */
.taskbar { background: linear-gradient(90deg, #212121, #211f29 50%, #202020); display: flex; align-items: center; color: #fff; }
.widgets { width: 391px; padding: 0 0 1px 16px; position: relative; }
.apps-row { width: 1058px; height: 60px; display: grid; grid-template-columns: repeat(16, 1fr); }
.app { position: relative; display: grid; place-items: center; padding-bottom: 2px; }
.app svg { width: 36px; height: 36px; }
.count { position: absolute; width: 24px; height: 24px; border-radius: 50%; color: #161616; font: 18px/24px "Open Sans", sans-serif; text-align: center; left: 36px; top: 4px; }
.widgets .count { left: 32px; top: -14px; }
.pinkish { background: #ff99a4; }
.coral { background: #f5846a; }
.amber { background: #ffc20e; }
.violet { background: #a142b5; color: #fff; font-size: 14px; }
.pre { position: absolute; left: 27px; top: 36px; font: 700 9px/11px "Open Sans", sans-serif; color: #111; letter-spacing: .5px; }
.mysql { position: absolute; left: 18px; top: 21px; font: 8.5px/12px "DejaVu Sans", sans-serif; letter-spacing: -.5px; }
.office { position: absolute; left: 15px; width: 19px; top: 20px; text-align: center; font: 700 14px/19px "Open Sans", sans-serif; }
.running::after, .focused::after { content: ""; position: absolute; bottom: 2px; width: 9px; height: 5px; border-radius: 3px; background: #9b9b9b; }
.focused { background: #2f2f34; border-radius: 7px; margin: 0 3px; box-shadow: inset 0 0 0 1px #3a3a3e; }
.focused::after { width: 24px; background: #f5846a; }
.tray { flex: 1; display: flex; align-items: center; padding-left: 33px; font: 17.5px/24px "Open Sans", sans-serif; }
.cloud { margin-left: 26px; }
.lang { width: 40px; text-align: center; margin-left: 24px; font-size: 17px; }
.wifi { margin: 0 10px 0 24px; }
.wifi ~ .line { margin-right: 10px; }
.clock { width: 106px; text-align: right; letter-spacing: .05px; white-space: nowrap; padding-bottom: 2px; }
.notify { margin-left: 14px; }
```
